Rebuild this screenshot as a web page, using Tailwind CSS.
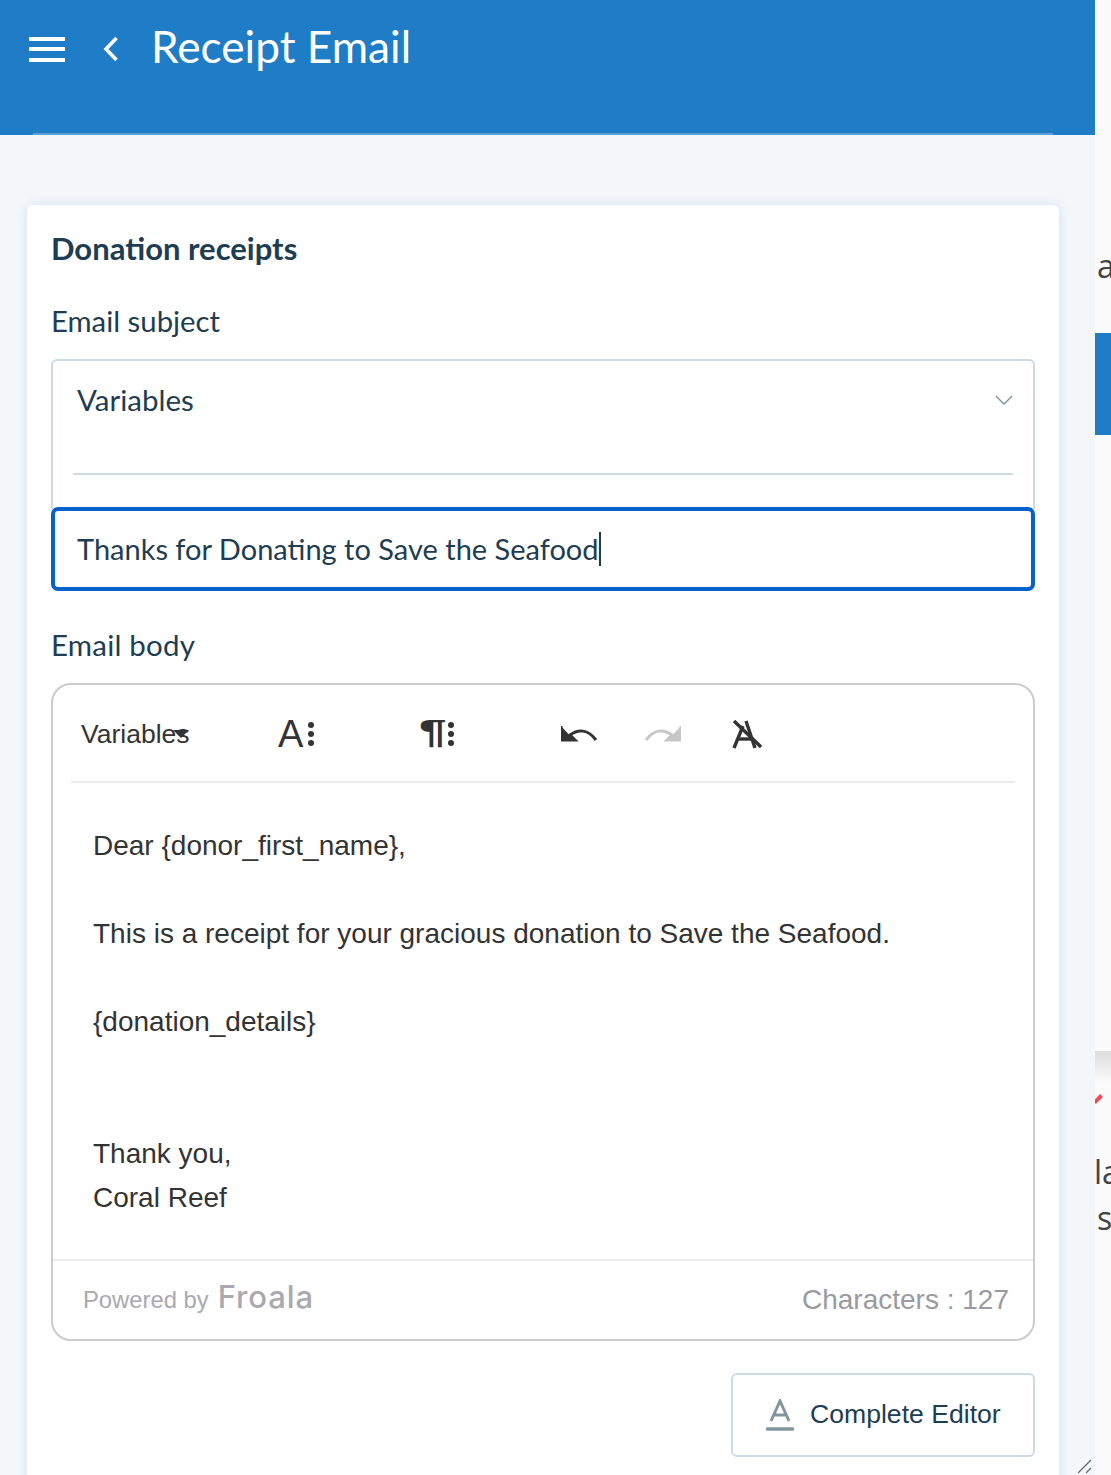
<!DOCTYPE html>
<html lang="en">
<head>
  <meta charset="UTF-8">
  <title>Receipt Email</title>
  <script src="https://cdn.jsdelivr.net/npm/@tailwindcss/browser@4"></script>
</head>
<body class="bg-[#fbfbfb] overflow-hidden">
  <div class="relative flex h-[1475px] w-[1111px] overflow-hidden">
    <!-- Main column -->
    <div class="w-[1095px] shrink-0 bg-[#f4f7fa] font-['Lato',sans-serif]">
      <!-- Header -->
      <header class="h-[135px] bg-[#1f7dc7] relative">
        <div class="flex items-center h-[94px] pl-[29px]">
          <div class="flex flex-col gap-[6.5px] w-9 mt-[4px]">
            <span class="block h-1 bg-white"></span>
            <span class="block h-1 bg-white"></span>
            <span class="block h-1 bg-white"></span>
          </div>
          <svg class="ml-[37px] mt-[4px] w-[18px] h-[26px]" viewBox="0 0 18 26" fill="none" stroke="white" stroke-width="3.6"><path d="M14.5 2 L4 13 L14.5 24"/></svg>
          <h1 class="ml-[31px] -mt-[1px] text-[44.2px] leading-none text-white font-normal">Receipt Email</h1>
        </div>
        <div class="absolute left-[33px] bottom-0 h-[2px] w-[1020px] bg-[#5a9fd9]"></div>
      </header>

      <!-- Card -->
      <section class="ml-[27px] mt-[70px] w-[1032px] h-[1300px] bg-white rounded-t-[6px] shadow-[0_0_12px_rgba(170,200,235,0.45)] px-[24px] text-[#1f3d52]">
        <h2 class="pt-[23px] text-[31px] leading-[40px] font-bold">Donation receipts</h2>
        <label class="block mt-[33px] text-[29.3px] leading-[40px]">Email subject</label>

        <div class="mt-[18px] h-[150px] border-2 border-b-0 border-[#cddbe6] rounded-t-[6px] px-[20px]">
          <div class="flex items-center justify-between h-[79px] pl-[4px] text-[29.5px]">
            <span>Variables</span>
            <svg class="w-[18px] h-[11px]" viewBox="0 0 20 12" fill="none" stroke="#7f95a3" stroke-width="1.6"><path d="M1 1 L10 10 L19 1"/></svg>
          </div>
          <div class="mt-[33px] h-[2px] bg-[#cddbe6]"></div>
        </div>

        <div class="-mt-[2px] h-[84px] flex items-center border-4 border-[#0561cc] rounded-[7px] pl-[22px] text-[29px]">
          <span>Thanks for Donating to Save the Seafood</span><span class="block w-[2px] h-[34px] bg-[#1f3d52]"></span>
        </div>

        <label class="block mt-[34px] text-[29.5px] leading-[40px] tracking-[0.2px]">Email body</label>

        <!-- Editor -->
        <div class="mt-[18px] h-[658px] border-2 border-[#cccccc] rounded-[20px] font-['Liberation_Sans',sans-serif] text-[#333333] flex flex-col">
          <div class="mx-[18px] h-[98px] shrink-0 pt-[2px] border-b-2 border-[#ebebeb] flex items-center">
            <div class="relative ml-[10px] w-[108px] text-[26.5px] leading-none">
              Variables
              <span class="absolute left-[92px] top-[9px] w-0 h-0 border-x-[8px] border-x-transparent border-t-[8px] border-t-[#333333]"></span>
            </div>
            <div class="ml-[89px] flex items-center gap-[5px] w-[36px]">
              <span class="text-[38px] leading-none">A</span>
              <span class="flex flex-col gap-[3px]"><i class="block w-[6px] h-[6px] rounded-full bg-[#333333]"></i><i class="block w-[6px] h-[6px] rounded-full bg-[#333333]"></i><i class="block w-[6px] h-[6px] rounded-full bg-[#333333]"></i></span>
            </div>
            <div class="ml-[105px] flex items-center gap-[11px] w-[36px]">
              <span class="text-[33px] leading-none font-bold origin-left scale-x-150 -translate-y-[3px]">¶</span>
              <span class="flex flex-col gap-[3px]"><i class="block w-[6px] h-[6px] rounded-full bg-[#333333]"></i><i class="block w-[6px] h-[6px] rounded-full bg-[#333333]"></i><i class="block w-[6px] h-[6px] rounded-full bg-[#333333]"></i></span>
            </div>
            <svg class="ml-[106px] w-[38px] h-[16px]" viewBox="0 0 38 16" fill="none"><path d="M0 0 V14 H14 L9 9 C17 3 27 3 35 14" stroke="#333333" stroke-width="3" stroke-linejoin="miter"/><path d="M0 0 V14 H13 Z" fill="#333333"/></svg>
            <svg class="ml-[44px] w-[38px] h-[16px]" viewBox="0 0 38 16" fill="none"><path d="M38 0 V14 H24 L29 9 C21 3 11 3 3 14" stroke="#c7c7c7" stroke-width="3"/><path d="M38 0 V14 H25 Z" fill="#c7c7c7"/></svg>
            <svg class="ml-[51px] w-[30px] h-[29px]" viewBox="0 0 30 29" fill="none" stroke="#333333" stroke-width="3.4"><path d="M2 28 L11 6 M14 1 L23 28"/><path d="M7 19 H19"/><path d="M2 1 L29 27"/></svg>
          </div>

          <div class="pl-[40px] pt-[41px] text-[28px] leading-[44px] h-[478px] shrink-0 border-b-2 border-[#ebebeb]">
            <p>Dear {donor_first_name},</p>
            <p class="mt-[44px]">This is a receipt for your gracious donation to Save the Seafood.</p>
            <p class="mt-[44px]">{donation_details}</p>
            <p class="mt-[88px]">Thank you,</p>
            <p>Coral Reef</p>
          </div>

          <div class="flex-1 flex items-center justify-between pl-[30px] pr-[24px] text-[#a9a9af]">
            <div class="flex items-baseline gap-[9px] text-[23.8px] -mt-[2px]">
              <span>Powered by</span>
              <span class="font-['Inter',sans-serif] font-medium text-[31px] leading-none tracking-[0.9px]">Froala</span>
            </div>
            <span class="text-[28px] text-[#9a9a9f]">Characters : 127</span>
          </div>
        </div>

        <div class="flex justify-end mt-[32px]">
          <button class="w-[304px] h-[84px] border-2 border-[#cddbe6] rounded-[6px] flex items-center pl-[33px] gap-[16px] font-['Liberation_Sans',sans-serif] text-[26.6px] text-[#1f3d52]">
            <svg class="w-[28px] h-[32px]" viewBox="0 0 28 32" fill="none" stroke="#82959f"><path d="M5 22 L14 2 L23 22 M8 16 H20" stroke-width="3"/><path d="M1.5 30 H26.5" stroke-width="3.4" stroke-linecap="round"/></svg>
            <span>Complete Editor</span>
          </button>
        </div>
      </section>
    </div>

    <!-- Neighbouring page cut off at the right edge -->
    <aside class="relative flex-1 overflow-hidden font-['Open_Sans',sans-serif] text-[#444444] text-[32px] leading-none">
      <span class="absolute left-[2px] top-[250px]">a</span>
      <div class="absolute left-0 top-[333px] w-full h-[102px] bg-[#1d7cc4]"></div>
      <div class="absolute left-0 top-[1051px] w-full h-[32px] bg-gradient-to-b from-[#dcdcdc] to-[#fbfbfb]"></div>
      <div class="absolute -left-[2px] top-[1097px] w-[10px] h-[4px] bg-[#ef4a55] -rotate-45"></div>
      <span class="absolute left-[-1px] top-[1156px]">la</span>
      <span class="absolute left-[2px] top-[1202px]">s</span>
    </aside>

    <!-- Resize handle -->
    <svg class="absolute left-[1076px] top-[1458px] w-[18px] h-[17px]" viewBox="0 0 18 17" fill="none" stroke="#666666" stroke-width="1.2"><path d="M2 15 L15 2"/><path d="M10 15 L15 10"/></svg>
  </div>
</body>
</html>
